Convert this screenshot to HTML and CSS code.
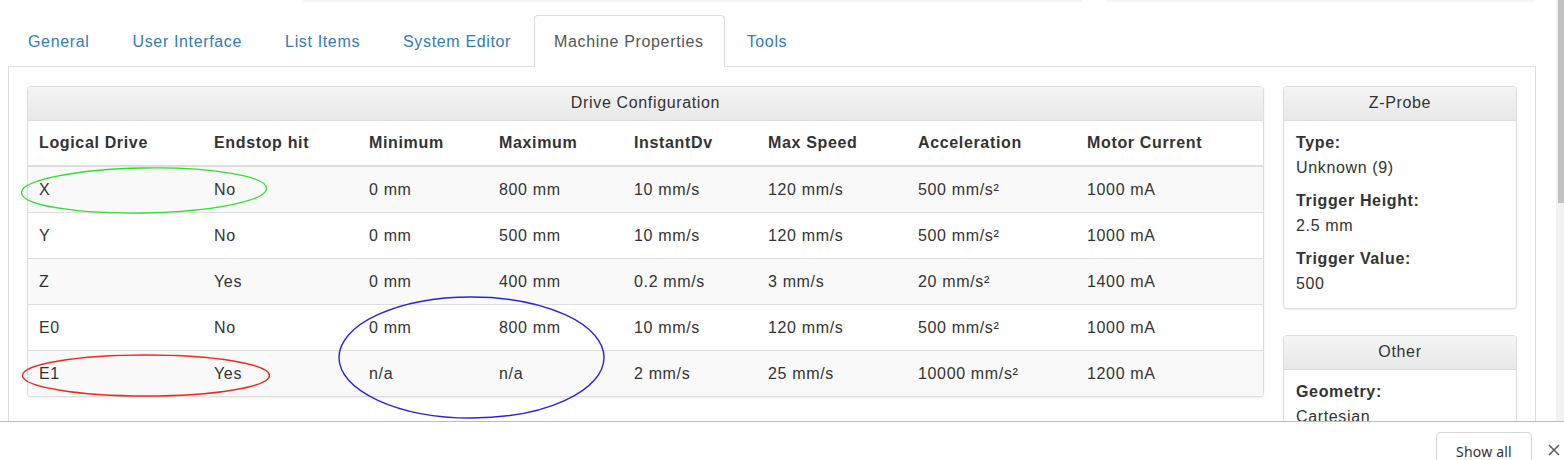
FILE: index.html
```html
<!DOCTYPE html>
<html lang="en">
<head>
<meta charset="utf-8">
<title>Machine Properties</title>
<link rel="stylesheet" href="styles.css">
</head>
<body>
<div class="screen">
  <div class="viewport">
    <div class="page">
      <div class="topcards">
        <div class="topcard topcard-a"></div>
        <div class="topcard topcard-b"></div>
      </div>
      <ul class="tabs">
        <li><a href="#">General</a></li>
        <li><a href="#">User Interface</a></li>
        <li><a href="#">List Items</a></li>
        <li><a href="#">System Editor</a></li>
        <li class="active"><a href="#">Machine Properties</a></li>
        <li><a href="#">Tools</a></li>
      </ul>
      <div class="tab-content">
        <div class="layout">
          <div class="panel">
            <div class="panel-heading">Drive Configuration</div>
            <table class="drives">
              <colgroup>
                <col class="c1"><col class="c2"><col class="c3"><col class="c4"><col class="c5"><col class="c6"><col class="c7"><col>
              </colgroup>
              <thead>
                <tr><th>Logical Drive</th><th>Endstop hit</th><th>Minimum</th><th>Maximum</th><th>InstantDv</th><th>Max Speed</th><th>Acceleration</th><th>Motor Current</th></tr>
              </thead>
              <tbody>
                <tr><td>X</td><td>No</td><td>0 mm</td><td>800 mm</td><td>10 mm/s</td><td>120 mm/s</td><td>500 mm/s²</td><td>1000 mA</td></tr>
                <tr><td>Y</td><td>No</td><td>0 mm</td><td>500 mm</td><td>10 mm/s</td><td>120 mm/s</td><td>500 mm/s²</td><td>1000 mA</td></tr>
                <tr><td>Z</td><td>Yes</td><td>0 mm</td><td>400 mm</td><td>0.2 mm/s</td><td>3 mm/s</td><td>20 mm/s²</td><td>1400 mA</td></tr>
                <tr><td>E0</td><td>No</td><td>0 mm</td><td>800 mm</td><td>10 mm/s</td><td>120 mm/s</td><td>500 mm/s²</td><td>1000 mA</td></tr>
                <tr><td>E1</td><td>Yes</td><td>n/a</td><td>n/a</td><td>2 mm/s</td><td>25 mm/s</td><td>10000 mm/s²</td><td>1200 mA</td></tr>
              </tbody>
            </table>
          </div>
          <div class="side">
            <div class="panel">
              <div class="panel-heading">Z-Probe</div>
              <div class="panel-body">
                <dl>
                  <dt>Type:</dt><dd>Unknown (9)</dd>
                  <dt>Trigger Height:</dt><dd>2.5 mm</dd>
                  <dt>Trigger Value:</dt><dd>500</dd>
                </dl>
              </div>
            </div>
            <div class="panel">
              <div class="panel-heading">Other</div>
              <div class="panel-body">
                <dl>
                  <dt>Geometry:</dt><dd>Cartesian</dd>
                </dl>
              </div>
            </div>
          </div>
        </div>
      </div>
      <svg class="annot" width="1556" height="421" viewBox="0 0 1556 421">
        <ellipse cx="144" cy="190.5" rx="122.5" ry="22.5" fill="none" stroke="#2de02d" stroke-width="1.4" transform="rotate(-1 144 190.5)"/>
        <ellipse cx="146" cy="375.5" rx="123.5" ry="20.5" fill="none" stroke="#ec2a1e" stroke-width="1.4"/>
        <ellipse cx="471.5" cy="357.5" rx="132.5" ry="60.5" fill="none" stroke="#2a22e0" stroke-width="1.4"/>
      </svg>
    </div>
    <div class="scrollbar"><div class="thumb"></div></div>
  </div>
  <div class="shelf">
    <button class="show-all" type="button">Show all</button>
    <svg class="close" width="12" height="12" viewBox="0 0 12 12"><path d="M1 1 L11 11 M11 1 L1 11" stroke="#5f5f5f" stroke-width="1.6" fill="none"/></svg>
  </div>
</div>
</body>
</html>
```

FILE: styles.css
```css
html, body {
  margin: 0;
  padding: 0;
  background: #fff;
}

body {
  font-family: "Liberation Sans", Arial, Helvetica, sans-serif;
  font-size: 16px;
  letter-spacing: 0.65px;
  color: #333;
}

.screen {
  width: 1564px;
  height: 460px;
  display: flex;
  flex-direction: column;
  overflow: hidden;
}

.viewport {
  height: 421px;
  display: flex;
  overflow: hidden;
  flex: none;
}

.page {
  position: relative;
  flex: 1;
  padding: 0 20px 0 8px;
}

.topcards {
  height: 15px;
  display: flex;
  align-items: flex-start;
}

.topcard {
  height: 1px;
  background: #f4f4f4;
  box-shadow: 0 1px 2px rgba(0, 0, 0, 0.06);
}

.topcard-a {
  margin-left: 295px;
  width: 779px;
}

.topcard-b {
  margin-left: 25px;
  width: 428px;
}

.tabs {
  list-style: none;
  margin: 0;
  padding: 0;
  display: flex;
  border-bottom: 1px solid #ddd;
}

.tabs li {
  margin-bottom: -1px;
}

.tabs a {
  display: block;
  margin-right: 2px;
  padding: 14px 20px 13px 19px;
  line-height: 23px;
  font-size: 16px;
  color: #337ab7;
  text-decoration: none;
  border: 1px solid transparent;
  border-radius: 4px 4px 0 0;
}

.tabs .active a {
  color: #555;
  background: #fff;
  border-color: #ddd #ddd transparent;
}

.tab-content {
  border: 1px solid #ddd;
  border-top: none;
  padding: 19px 18px;
  height: 600px;
}

.layout {
  display: grid;
  grid-template-columns: 1fr 234px;
  column-gap: 19px;
  align-items: start;
}

.panel {
  background: #fff;
  border: 1px solid #ddd;
  border-radius: 4px;
  box-shadow: 0 1px 2px rgba(0, 0, 0, 0.07);
  overflow: hidden;
}

.panel-heading {
  background: linear-gradient(to bottom, #f5f5f5 0%, #e8e8e8 100%);
  border-bottom: 1px solid #ddd;
  text-align: center;
  font-size: 16px;
  line-height: 23px;
  padding: 4px 10px 6px;
  color: #333;
}

.drives {
  width: 100%;
  border-collapse: separate;
  border-spacing: 0;
  table-layout: fixed;
  font-size: 16px;
}

.drives .c1 { width: 175px; }
.drives .c2 { width: 155px; }
.drives .c3 { width: 130px; }
.drives .c4 { width: 135px; }
.drives .c5 { width: 134px; }
.drives .c6 { width: 150px; }
.drives .c7 { width: 169px; }

.drives th,
.drives td {
  text-align: left;
  line-height: 23px;
  white-space: nowrap;
}

.drives th {
  font-weight: bold;
  padding: 10px 11px 11px;
  border-bottom: 2px solid #ddd;
}

.drives td {
  padding: 11px 11px;
  border-top: 1px solid #ddd;
}

.drives tbody tr:first-child td {
  border-top: none;
}

.drives tbody tr:nth-child(odd) td {
  background: #f9f9f9;
}

.side {
  display: flex;
  flex-direction: column;
  gap: 26px;
}

.panel-body {
  padding: 9px 12px 12px;
}

.panel-body dl {
  margin: 0;
}

.panel-body dt {
  font-weight: bold;
  line-height: 25px;
}

.panel-body dd {
  margin: 0 0 8px;
  line-height: 25px;
}

.panel-body dd:last-child {
  margin-bottom: 0;
}

.annot {
  position: absolute;
  left: 0;
  top: 0;
  pointer-events: none;
}

.scrollbar {
  width: 8px;
  flex: none;
  background: #f1f1f1;
}

.thumb {
  margin-left: 2px;
  width: 6px;
  height: 203px;
  background: #c1c1c1;
}

.shelf {
  flex: none;
  height: 39px;
  box-sizing: border-box;
  border-top: 1px solid #bdbdbd;
  background: #fff;
  display: flex;
  justify-content: flex-end;
  align-items: flex-start;
  padding: 10px 4px 0 0;
}

.show-all {
  width: 96px;
  height: 34px;
  margin-right: 16px;
  border: 1px solid #d6d6d6;
  border-radius: 4px;
  background: #fff;
  font-family: "Noto Sans", "Open Sans", sans-serif;
  font-size: 14px;
  letter-spacing: 0.2px;
  color: #333;
  padding: 4px 0 0;
  line-height: 30px;
  display: flex;
  justify-content: center;
  align-items: flex-start;
}

.close {
  margin-top: 12px;
}
```
